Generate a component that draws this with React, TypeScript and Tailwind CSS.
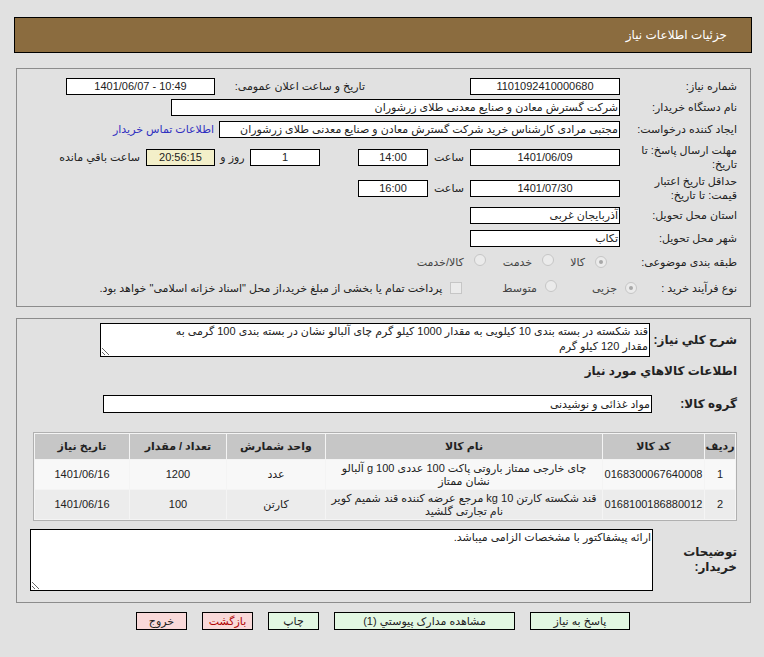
import React from "react";

// فیلد فقط خواندنی با کادر مشکی
function Box({ w, children, center = true, className = "", ltr = false }: { w: string; children?: React.ReactNode; center?: boolean; className?: string; ltr?: boolean }) {
  return (
    <div
      dir={ltr ? "ltr" : undefined}
      className={`${w} h-[17px] shrink-0 border border-black bg-white leading-[15px] whitespace-nowrap overflow-hidden ${center ? "text-center" : "text-right pr-[1px]"} ${className}`}
    >
      {children}
    </div>
  );
}

function Radio({ checked = false }: { checked?: boolean }) {
  return (
    <span className="inline-flex w-[12px] h-[12px] shrink-0 items-center justify-center rounded-full border border-[#c6c6c6] bg-[#ebebeb]">
      {checked && <span className="w-[4px] h-[4px] rounded-full bg-[#a8a8a8]"></span>}
    </span>
  );
}

function Btn({ w, children, pink = false, red = false }: { w: string; children: React.ReactNode; pink?: boolean; red?: boolean }) {
  return (
    <div
      className={`${w} h-[18px] border border-black leading-[16px] text-center ${pink ? "bg-[#f9d9d9]" : "bg-[#e2f7e2]"} ${red ? "text-[#b00000]" : "text-[#222]"}`}
    >
      {children}
    </div>
  );
}

export default function App() {
  const rows = [
    {
      n: "1",
      code: "0168300067640008",
      name: "چای خارجی ممتاز باروتی پاکت 100 عددی 100 g آلبالو نشان ممتاز",
      unit: "عدد",
      qty: "1200",
      date: "1401/06/16",
      bg: "bg-[#f8f8f8]",
    },
    {
      n: "2",
      code: "0168100186880012",
      name: "قند شکسته کارتن 10 kg مرجع عرضه کننده قند شمیم کویر نام تجارتی گلشید",
      unit: "کارتن",
      qty: "100",
      date: "1401/06/16",
      bg: "bg-[#ececec]",
    },
  ];

  return (
    <div
      dir="rtl"
      className="min-h-[657px] bg-[#e1e1e1] pt-[17px] text-[11px] text-[#222]"
      style={{ fontFamily: '"Liberation Sans", "DejaVu Sans", sans-serif' }}
    >
      {/* سربرگ */}
      <div className="ml-[14px] mr-[12px] h-[36px] border border-black bg-[#8b6c3f] flex items-center pr-[24px] text-white text-[12px]">
        جزئیات اطلاعات نیاز
      </div>

      {/* بخش اول */}
      <div className="ml-[16px] mr-[13px] mt-[15px] border border-[#8c8c8c] pt-[7px] pb-[5px] pr-[13px]">
        <div className="h-[21px] flex items-center">
          <div className="w-[117px] shrink-0">شماره نیاز:</div>
          <Box w="w-[150px]">1101092410000680</Box>
          <div className="w-[150px] mr-[105px] shrink-0">تاریخ و ساعت اعلان عمومی:</div>
          <Box w="w-[149px]" ltr>1401/06/07 - 10:49</Box>
        </div>

        <div className="h-[21px] flex items-center">
          <div className="w-[117px] shrink-0">نام دستگاه خریدار:</div>
          <Box w="w-[449px]" center={false}>شرکت گسترش معادن و صنایع معدنی طلای زرشوران</Box>
        </div>

        <div className="h-[23px] flex items-center">
          <div className="w-[117px] shrink-0">ایجاد کننده درخواست:</div>
          <Box w="w-[401px]" center={false}>مجتبی مرادی کارشناس خرید شرکت گسترش معادن و صنایع معدنی طلای زرشوران</Box>
          <span className="mr-[5px] text-[#3030c0] whitespace-nowrap">اطلاعات تماس خریدار</span>
        </div>

        <div className="h-[32px] flex items-center">
          <div className="w-[117px] shrink-0 leading-[14px]">
            مهلت ارسال پاسخ: تا
            <br />
            تاریخ:
          </div>
          <Box w="w-[150px]">1401/06/09</Box>
          <div className="w-[42px] shrink-0 text-center">ساعت</div>
          <Box w="w-[70px]">14:00</Box>
          <div className="w-[38px] shrink-0"></div>
          <Box w="w-[70px]">1</Box>
          <div className="w-[35px] shrink-0 text-center">روز و</div>
          <Box w="w-[69px]" className="bg-[#f3efc9]!">20:56:15</Box>
          <span className="mr-[6px] whitespace-nowrap">ساعت باقي مانده</span>
        </div>

        <div className="h-[30px] flex items-center">
          <div className="w-[117px] shrink-0 leading-[14px]">
            حداقل تاریخ اعتبار
            <br />
            قیمت: تا تاریخ:
          </div>
          <Box w="w-[150px]">1401/07/30</Box>
          <div className="w-[42px] shrink-0 text-center">ساعت</div>
          <Box w="w-[70px]">16:00</Box>
        </div>

        <div className="h-[24px] flex items-center">
          <div className="w-[117px] shrink-0">استان محل تحویل:</div>
          <Box w="w-[150px]" center={false}>آذربایجان غربی</Box>
        </div>

        <div className="h-[22px] flex items-center">
          <div className="w-[117px] shrink-0">شهر محل تحویل:</div>
          <Box w="w-[150px]" center={false}>تکاب</Box>
        </div>

        <div className="h-[26px] flex items-center">
          <div className="w-[130px] shrink-0">طبقه بندی موضوعی:</div>
          <Radio checked />
          <span className="mr-[10px] text-[#444]">کالا</span>
          <span className="mr-[16px]"><Radio /></span>
          <span className="mr-[10px] text-[#444]">خدمت</span>
          <span className="mr-[17px]"><Radio /></span>
          <span className="mr-[10px] text-[#444]">کالا/خدمت</span>
        </div>

        <div className="h-[26px] flex items-center">
          <div className="w-[100px] shrink-0">نوع فرآیند خرید :</div>
          <Radio checked />
          <span className="mr-[8px] text-[#444]">جزیی</span>
          <span className="mr-[35px]"><Radio /></span>
          <span className="mr-[8px] text-[#444]">متوسط</span>
          <span className="mr-[40px] w-[12px] h-[12px] shrink-0 border border-[#c6c6c6] bg-[#ebebeb]"></span>
          <span className="mr-[8px] whitespace-nowrap">
            پرداخت تمام یا بخشی از مبلغ خرید،از محل "اسناد خزانه اسلامی" خواهد بود.
          </span>
        </div>
      </div>

      {/* بخش دوم */}
      <div className="ml-[16px] mr-[13px] mt-[11px] border border-[#8c8c8c] pt-[4px] pb-[11px] pr-[13px]">
        <div className="flex items-center">
          <div className="w-[87px] shrink-0 font-bold text-[12px]">شرح کلي نياز:</div>
          <textarea
            readOnly
            className="w-[550px] h-[34px] border border-black bg-white p-0 pr-[1px] pl-[55px] leading-[15px] overflow-hidden resize"
            value="قند شکسته در بسته بندی 10 کیلویی به مقدار 1000 کیلو گرم چای آلبالو نشان در بسته بندی 100 گرمی به مقدار 120 کیلو گرم"
          ></textarea>
        </div>

        <div className="h-[28px] flex items-center font-bold text-[12px]">اطلاعات کالاهاي مورد نياز</div>

        <div className="mt-[10px] h-[18px] flex items-center">
          <div className="w-[85px] shrink-0 font-bold text-[12px]">گروه کالا:</div>
          <div className="w-[549px] h-[18px] border border-black bg-white pr-[1px] leading-[16px]">مواد غذائی و نوشیدنی</div>
        </div>

        <table className="mt-[19px] ml-[2px] w-[704px] table-fixed border border-[#b0b0b0] border-separate border-spacing-[1px] bg-[#f4f4f4] text-center">
          <thead>
            <tr className="h-[25px] bg-[#c6c6c6]">
              <th className="w-[30px] font-bold">ردیف</th>
              <th className="w-[101px] font-bold">کد کالا</th>
              <th className="w-[276px] font-bold">نام کالا</th>
              <th className="w-[98px] font-bold">واحد شمارش</th>
              <th className="w-[96px] font-bold">تعداد / مقدار</th>
              <th className="font-bold">تاریخ نیاز</th>
            </tr>
          </thead>
          <tbody>
            {rows.map((r) => (
              <tr key={r.n} className={`h-[29px] ${r.bg}`}>
                <td>{r.n}</td>
                <td>{r.code}</td>
                <td className="leading-[13px] px-[5px]">{r.name}</td>
                <td>{r.unit}</td>
                <td>{r.qty}</td>
                <td>{r.date}</td>
              </tr>
            ))}
          </tbody>
        </table>

        <div className="mt-[8px] flex items-center">
          <div className="w-[84px] shrink-0 font-bold text-[12px] leading-[15px]">
            توضیحات
            <br />
            خریدار:
          </div>
          <textarea
            readOnly
            className="w-[623px] h-[62px] border border-black bg-white p-0 pr-[1px] leading-[15px] overflow-hidden resize"
            value="ارائه پیشفاکتور با مشخصات الزامی میباشد."
          ></textarea>
        </div>
      </div>

      {/* دکمه‌ها */}
      <div className="mt-[9px] flex justify-center gap-[15px] pl-[2px]">
        <Btn w="w-[100px]">پاسخ به نیاز</Btn>
        <Btn w="w-[181px]">مشاهده مدارک پيوستي (1)</Btn>
        <Btn w="w-[51px]">چاپ</Btn>
        <Btn w="w-[51px]" pink red>بازگشت</Btn>
        <Btn w="w-[51px]" pink>خروج</Btn>
      </div>
    </div>
  );
}
